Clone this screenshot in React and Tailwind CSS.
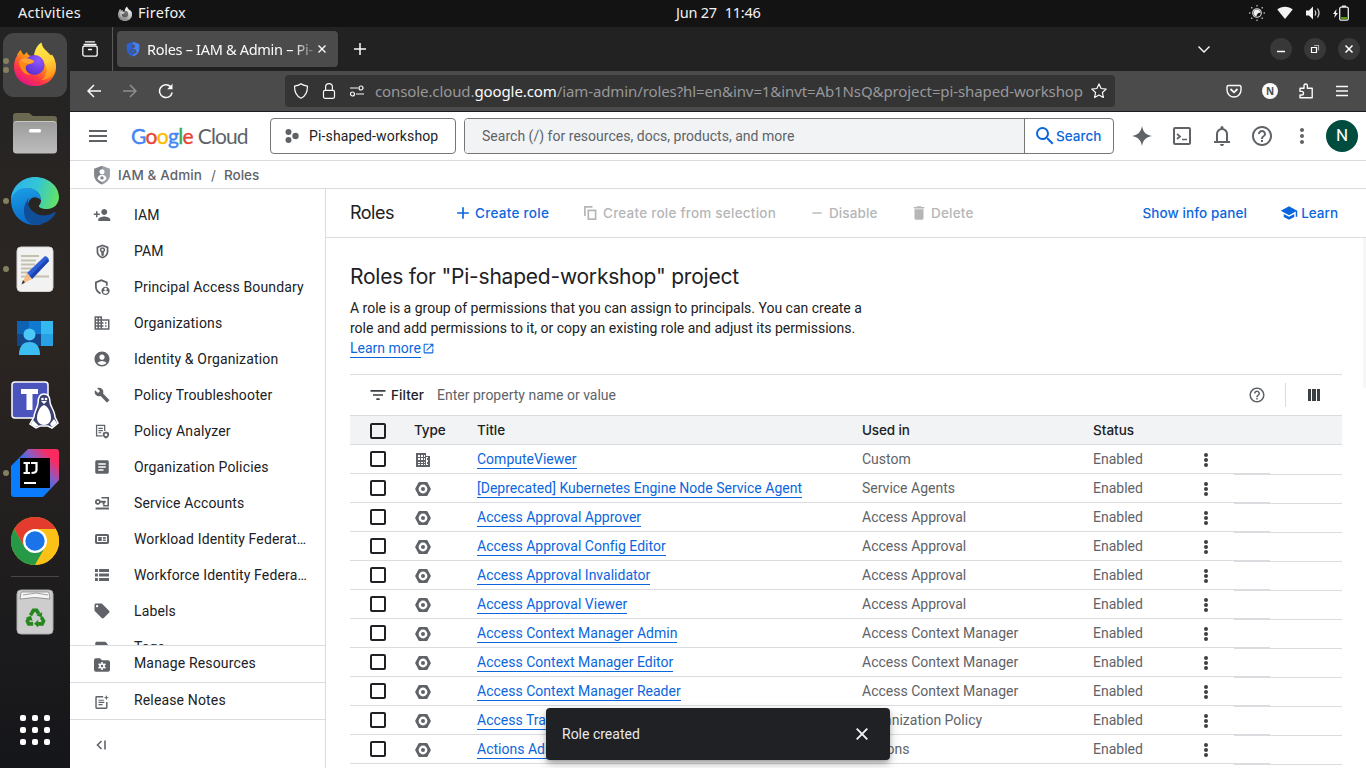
import React from 'react';
import {
  MdPersonAdd, MdDomain, MdAccountCircle, MdBuild, MdArticle,
  MdLocalOffer, MdLabel, MdSearch, MdHelpOutline, MdMoreVert, MdSchool, MdAdd, MdRemove,
  MdDelete, MdOpenInNew, MdFilterList, MdMenu,
} from 'react-icons/md';

const ui = "font-['Noto_Sans',sans-serif]";
const gs = "font-['Inter',sans-serif]";

/* ---------- Dock icons (48 x 48) ---------- */

const FirefoxIcon = ({ mono = false, className = 'size-12' }) => {
  const id = mono ? 'm' : 'c';
  const c = mono
    ? ['#f0f0f0', '#b5b5b5', '#8a8a8a', '#555', '#777', '#d0d0d0']
    : ['#ffe94a', '#ff8a16', '#e31587', '#5b2fd0', '#9059ff', '#ffa436'];
  return (
    <svg viewBox="0 0 48 48" className={className}>
      <defs>
        <linearGradient id={`fx${id}`} x1="0.85" y1="0.1" x2="0.25" y2="0.95">
          <stop offset="0" stopColor={c[0]} />
          <stop offset="0.4" stopColor={c[1]} />
          <stop offset="0.72" stopColor={mono ? '#999' : '#ff3647'} />
          <stop offset="1" stopColor={c[2]} />
        </linearGradient>
        <radialGradient id={`fp${id}`} cx="0.7" cy="0.25" r="0.8">
          <stop offset="0" stopColor={c[4]} />
          <stop offset="1" stopColor={c[3]} />
        </radialGradient>
        <linearGradient id={`fy${id}`} x1="0.5" y1="0" x2="0.7" y2="1">
          <stop offset="0" stopColor={c[0]} />
          <stop offset="0.5" stopColor={mono ? '#ddd' : '#ffd23a'} />
          <stop offset="1" stopColor={c[1]} />
        </linearGradient>
      </defs>
      <path d="M10 9c.5 2.500 1.500 4 3 5l3-3c.3 2 1.500 3.500 4 4l20-1c3.500 3.500 5 8 5 12 0 11-9 19-21 19S3 37 3 26c0-5 1-8 3-11 0-2 2-5 4-6z" fill={`url(#fx${id})`} />
      <path d="M23 14c1-5 3-10 7.500-12.500.5 4 2.500 6 5.500 9l4 4 1-1c3 4 4 8 3.500 13-1 8-7 12-14 12.500 6-4 7-13 2-18-2-3-6-5-9.500-7z" fill={`url(#fy${id})`} />
      <circle cx="23.500" cy="24" r="10" fill={`url(#fp${id})`} />
      <path d="M8 20c6-2 9-1 15-.5 1 1.500-1 3-4 3.500-4 .5-5 3-4 6 1 2.500 3 4 5 5-7 0-12-6-12-14z" fill={c[1]} />
      <path d="M9 19c4-2.500 8-2 13.500.5.5 1.500-2 2.500-5 3-3-.2-6-1.500-8.500-3.500z" fill={c[5]} />
    </svg>
  );
};

const FolderIcon = () => (
  <svg viewBox="0 0 48 48" className="size-12">
    <defs>
      <linearGradient id="fold" x1="0" y1="0" x2="0" y2="1">
        <stop offset="0" stopColor="#9b9b9b" />
        <stop offset="1" stopColor="#bdbdbd" />
      </linearGradient>
    </defs>
    <path d="M2 7q0-3 3-3h13l4 3h21q3 0 3 3v12H2z" fill="#6b6850" />
    <rect x="2" y="12" width="44" height="32.500" rx="3.500" fill="url(#fold)" />
    <path d="M3 14q1-1.500 3-1.500h36q2 0 3 1.500" fill="none" stroke="#c8c8c8" strokeWidth="1" />
    <rect x="18" y="20" width="12" height="3.500" rx="1.500" fill="#fff" />
  </svg>
);

const EdgeIcon = () => (
  <svg viewBox="0 0 48 48" className="size-12">
    <defs>
      <linearGradient id="e1" x1="0" y1="0.3" x2="1" y2="0.5">
        <stop offset="0" stopColor="#2fb2ea" />
        <stop offset="0.5" stopColor="#33c5d8" />
        <stop offset="1" stopColor="#62e265" />
      </linearGradient>
      <linearGradient id="e2" x1="0.3" y1="0" x2="0.5" y2="1">
        <stop offset="0" stopColor="#1a9de6" />
        <stop offset="1" stopColor="#0a68c4" />
      </linearGradient>
    </defs>
    <path d="M0 23C1 15 8 10 16 11c8 0 14 5 14 12-7-6-13-1-13 6 0 8 6 14 14 18-3 1-5 1-7 1C10 48 0 37 0 23z" fill="url(#e2)" />
    <path d="M24 0c13 0 24 9 24 20 0 7-5 12-12 12-5 0-8.500-1.500-8-3.500 1-1 2-3 2-5C30 15 23 11 15 11 7 11 2 16 0 23 0 10 11 0 24 0z" fill="url(#e1)" />
    <path d="M19 19.500c-4 4-2 11 3 15 6 5 14 5 21 1 1-.5 2 0 1.500 1C40 44 32 48 24 48c-8-1-12-9-11-17 1-5 3-8.500 6-11.500z" fill="#114e99" />
  </svg>
);

const EditorIcon = () => (
  <svg viewBox="0 0 48 48" className="size-12">
    <rect x="6" y="2" width="36" height="44.500" rx="4" fill="#f2f2f2" stroke="#d4d4d4" />
    <path d="M10 11h18M10 15.500h15M10 19.500h14M10 23.500h12M10 27.500h9M10 31.500h28" stroke="#c4c0ae" strokeWidth="1.800" />
    <path d="m16 28 18-17q4 1 4 5L21 34z" fill="#2f5fd6" />
    <path d="m19 31 17-17 2 2-17 18z" fill="#1b42b0" />
    <path d="m16 28 5 6-10 5z" fill="#f4bc82" />
    <path d="m12 35 2 2.500-3.500 2z" fill="#333" />
  </svg>
);

const ContactsIcon = () => (
  <svg viewBox="0 0 48 48" className="size-12">
    <rect x="6" y="8" width="36" height="25" rx="1.500" fill="#0f7ad0" />
    <path d="M6 8h12v13H6z" fill="#0e62b4" />
    <path d="M6 21h24v12H6z" fill="#14468c" />
    <path d="M30 8h12v13H30z" fill="#35b8f0" />
    <path d="M30 21h12v12H30z" fill="#28a0e4" />
    <circle cx="18.500" cy="21.500" r="6" fill="#4cc8f6" />
    <path d="M8 42c0-9 4-13 10.500-13S29 33 29 42z" fill="#3dbef2" />
  </svg>
);

const TeamsIcon = () => (
  <svg viewBox="0 0 48 48" className="size-12">
    <rect x="1" y="1" width="36" height="36" rx="3" fill="#4b53bc" stroke="#fff" strokeWidth="1.500" />
    <path d="M10 8h17v5h-5.500v16h-6V13H10z" fill="#fff" />
    <path d="M33 13c4 0 6 3 6 8 0 4 5 9 5 15l3 6-6 5-4-2h-8l-4 2-6-4 4-7c0-5 4-10 4-14 0-6 2-9 6-9z" fill="#3b4272" stroke="#fff" strokeWidth="1.500" />
    <path d="M33 24c4 1 7 8 7 13 0 4-3 7-7 7s-7-3-7-7c0-5 3-12 7-13z" fill="#fff" />
    <path d="m22 39 6 6-4 1-4-3zM43 38l3 4-5 4-2-3zM30 20h6l-3 3z" fill="#fff" />
    <circle cx="31.500" cy="18" r="1.300" fill="#fff" />
    <circle cx="35" cy="18" r="1.300" fill="#fff" />
  </svg>
);

const IntellijIcon = () => (
  <svg viewBox="0 0 48 48" className="size-12">
    <defs>
      <linearGradient id="ij" x1="0.1" y1="0.75" x2="0.85" y2="0.05">
        <stop offset="0.35" stopColor="#0a7cff" />
        <stop offset="0.65" stopColor="#8f5ac0" />
        <stop offset="0.92" stopColor="#fb2a60" />
      </linearGradient>
    </defs>
    <path d="M17 0h28q3 0 3 3v28L32 48H3q-3 0-3-3V17z" fill="url(#ij)" />
    <path d="M9 9h30v30H9z" fill="#000" />
    <path d="M12.500 14h6.500M15.750 14v10M12.500 24h6.500M20 14h5.500v7q0 3-5 3" fill="none" stroke="#fff" strokeWidth="2.200" />
    <path d="M13 34h12" stroke="#fff" strokeWidth="2" />
  </svg>
);

const ChromeIcon = () => (
  <svg viewBox="0 0 48 48" className="size-12">
    <circle cx="24" cy="24" r="24" fill="#fbc116" />
    <path d="M3.200 12A24 24 0 0 1 44.800 12H24L13.600 30z" fill="#e33b2e" />
    <path d="M3.200 12A24 24 0 0 0 24 48L34.400 30 24 24 13.600 30z" fill="#269a47" />
    <path d="M24 12h20.800A24 24 0 0 1 24 48l10.400-18z" fill="#fbc116" />
    <circle cx="24" cy="24" r="12" fill="#fff" />
    <circle cx="24" cy="24" r="9.700" fill="#1a73e8" />
  </svg>
);

const TrashIcon = () => (
  <svg viewBox="0 0 48 48" className="size-12">
    <rect x="6" y="2" width="36" height="44" rx="4" fill="#cdcdcd" stroke="#aaa" />
    <path d="M10 5q0-1 1-1h26q1 0 1 1l1 6q-15-3-30 0z" fill="#f6f6f6" stroke="#777" strokeWidth="0.700" />
    <path d="m12 7 13-2 12 2" fill="none" stroke="#888" strokeWidth="0.800" />
    <g transform="translate(2.400 3.500) scale(0.9)">
      <g fill="none" stroke="#26871f" strokeWidth="4">
        <path d="m19 26.500 3.200-5.500h3.600l2.500 4" />
        <path d="m31 28.500 2.500 4.300-1.500 3.200h-5" />
        <path d="M22 36h-5l-1.500-3.200 2.500-4" />
      </g>
      <path d="m25.500 26.500 6.500-3.500-.5 6zM27.500 31.500v8.500l-4.500-4.200zM13.500 29.500l6-2.500 2 6z" fill="#26871f" />
    </g>
  </svg>
);

/* ---------- Console icons drawn by hand ---------- */

const Svg = ({ children, className = 'size-[18px]', ...p }) => (
  <svg viewBox="0 0 24 24" fill="currentColor" className={className} {...p}>{children}</svg>
);

const ShieldKey = () => (
  <Svg className="size-[15px]">
    <path fillRule="evenodd" d="M12 .800 2.500 4.500V12c0 5.500 4.300 9.800 9.500 11.300 5.200-1.500 9.500-5.800 9.500-11.300V4.500zm0 2.900 6.800 2.600V12c0 4-2.900 7-6.800 8.400C8.100 19 5.200 16 5.200 12V6.300z" />
    <path fillRule="evenodd" d="M12 5.200a4.300 4.300 0 0 0-1.800 8.200V18l1.800 1.700 2.800-2.200-1.300-1.500 1.300-1.500-1-1.100A4.300 4.300 0 0 0 12 5.200zm0 2.500a1.700 1.700 0 1 1 0 3.400 1.700 1.700 0 0 1 0-3.400z" />
  </Svg>
);

const ShieldPerson = () => (
  <Svg className="size-4">
    <path d="M11 .500 1.500 4v7.500c0 5.500 3.800 10 8.500 11.500v-2.800c-3.300-1.500-5.800-4.700-5.800-8.700V6L11 3.300 17.800 6v4h2.700V4z" />
    <path fillRule="evenodd" d="M17.300 11.500a6.200 6.200 0 1 0 0 12.400 6.200 6.200 0 0 0 0-12.400zm0 1.600a2 2 0 1 1 0 4 2 2 0 0 1 0-4zm-3.700 6.700c0-1.400 2-2.100 3.700-2.100s3.700.7 3.700 2.100c-1 1.600-2.400 2.300-3.700 2.300s-2.700-.7-3.700-2.300z" />
  </Svg>
);

const PolicyDoc = () => (
  <Svg className="size-[15px]">
    <path d="M1.500 1h15v10h-2V3h-11v15H12v2H1.500z" />
    <path d="M5.500 6h7v1.900h-7zM5.500 9.500h7v1.900h-7zM5.500 13h4.500v1.900H5.500z" />
    <path fillRule="evenodd" d="m17.500 12 5 1.800v3.400c0 2.800-2.200 5-5 6-2.800-1-5-3.200-5-6v-3.400zm0 3a2.200 2.200 0 1 0 0 4.400 2.200 2.200 0 0 0 0-4.400z" />
  </Svg>
);

const ServiceAcc = () => (
  <Svg className="size-3.5">
    <path d="M11 1.500h13V18H14v-2.500h7.300V4.200H11zM1 19.500h23V23H1z" />
    <path fillRule="evenodd" d="M5 5a5 5 0 1 0 4.600 6.700H13V15h3.500v-3.300h2V8.300H9.600A5 5 0 0 0 5 5zm0 3a2 2 0 1 1 0 4 2 2 0 0 1 0-4z" />
  </Svg>
);

const Workload = () => (
  <Svg className="size-3.5">
    <path fillRule="evenodd" d="M3 3.500h18q3 0 3 3v11q0 3-3 3H3q-3 0-3-3v-11q0-3 3-3zm.5 3.200v10.600h17V6.700z" />
    <path d="M5.500 8.500h6v7h-6zM13.500 8.500h5v3h-5zM13.500 12.700h5v2.800h-5z" />
  </Svg>
);

const Workforce = () => (
  <Svg className="size-3.5"><path d="M0 1.700h5v5.200H0zM7 1.700h17v5.200H7zM0 9.400h5v5.200H0zM7 9.400h17v5.200H7zM0 17.100h5v5.200H0zM7 17.100h17v5.200H7z" /></Svg>
);

const FolderGear = () => (
  <Svg className="mt-1 size-4">
    <path d="M0 5q0-3 3-3h6l3 3h9q3 0 3 3v11q0 3-3 3H3q-3 0-3-3z" />
    <g fill="none" stroke="#fff">
      <circle cx="12" cy="13.500" r="3" strokeWidth="2.400" />
      <path d="M12 7.500v3M12 16.500v3M6.800 10.500l2.600 1.500M14.600 15l2.600 1.500M6.800 16.500 9.400 15M14.600 12l2.600-1.500" strokeWidth="2.200" />
    </g>
  </Svg>
);

const Notes = () => (
  <Svg className="mt-1 size-3.5">
    <path d="M14 4.300H3v17h16V12h2.500v9.500Q21.500 24 19 24H3q-2.500 0-2.500-2.500V4.300Q.500 1.800 3 1.800h11z" />
    <path d="M6 8h9v2H6zM6 11.700h10v2H6zM6 15.400h7v2H6z" />
    <path d="m19.500 0 1.200 3.300L24 4.500l-3.300 1.200L19.500 9l-1.200-3.300L15 4.500l3.300-1.200z" />
  </Svg>
);

const IamShield = ({ className, a, b, face = '#fff' }) => (
  <svg viewBox="0 0 24 24" className={className}>
    <path d="M12 1 2.500 4.500V12c0 5.300 4.300 9.800 9.500 11.400z" fill={a} />
    <path d="M12 1v22.400c5.200-1.600 9.500-6.100 9.500-11.400V4.500z" fill={b} />
    <circle cx="12" cy="8" r="3" fill={face} />
    <path d="M6.500 16.500c.5-3.500 2.700-4.800 5.500-4.800s5 1.300 5.500 4.800c-1.500 2-3.300 3-5.500 3.800-2.200-.8-4-1.800-5.500-3.800z" fill={face} />
    <circle cx="12" cy="15.500" r="2" fill={a} />
  </svg>
);

const BuildingType = () => (
  <svg viewBox="0 0 14 14" className="ml-[1px] size-3.5" fill="#5f6368" shapeRendering="crispEdges">
    <path fillRule="evenodd" d="M0 0h10v3h4v11H0zM2 2v2h2V2zM5 2v2h2V2zM8 2v2h1V2zM2 5v2h2V5zM5 5v2h2V5zM8 5v2h1V5zM2 9v1h2V9zM5 9v1h2V9zM8 9v1h1V9zM2 11v1h2v-1zM5 11v1h2v-1zM8 11v1h1v-1zM10 4v8h2V4z" />
    <path d="M11 5h1v2h-1zM11 9h1v2h-1z" />
  </svg>
);

const HexType = () => (
  <svg viewBox="0 0 16 14" className="h-3.5 w-4" fill="#5f6368">
    <path fillRule="evenodd" d="M4.500 0h7q.6 0 1 .6L15.700 6.400q.3.600 0 1.200L12.500 13.400q-.4.600-1 .6h-7q-.6 0-1-.6L.3 7.600Q0 7 .3 6.400L3.500.6Q3.900 0 4.500 0zM8 2.600a4.400 4.400 0 1 0 0 8.800 4.400 4.400 0 0 0 0-8.800z" />
    <circle cx="8" cy="7" r="2" />
  </svg>
);

const Kebab = ({ color = '#3c4043' }) => (
  <svg viewBox="0 0 4 14" className="h-3.5 w-1" fill={color}>
    <circle cx="2" cy="2" r="2" /><circle cx="2" cy="7" r="2" /><circle cx="2" cy="12" r="2" />
  </svg>
);

/* ---------- Desktop chrome ---------- */

function TopBar() {
  return (
    <div className={`flex h-[27px] shrink-0 items-center bg-[#131313] text-[14.500px] text-[#f2f2f2] ${ui}`}>
      <div className="-mt-px w-[117px] pl-[18px] tracking-[0.25px]">Activities</div>
      <FirefoxIcon mono className="mr-[5px] size-4" />
      <div className="-mt-px w-[538px] tracking-[0.25px]">Firefox</div>
      <div className="-mt-px flex w-[87px] gap-2 whitespace-nowrap tracking-[-0.25px]"><span>Jun 27</span><span>11:46</span></div>
      <div className="ml-auto flex items-center gap-3 pr-[17px] pb-0.5">
        <svg viewBox="0 0 16 16" className="size-4" fill="#eee">
          <circle cx="8" cy="8" r="4.300" fill="none" stroke="#ddd" strokeWidth="1.100" />
          <path d="M8 4.500a3.500 3.500 0 1 0 3.500 3.800A3 3 0 0 1 8 4.500z" transform="rotate(90 8 8)" />
          <path d="M7.300 0h1.400v1.500H7.300zM7.300 14.500h1.400V16H7.300zM0 7.300h1.500v1.400H0zM14.500 7.300H16v1.400h-1.500zM2 2h1.500v1.500H2zM12.500 2H14v1.500h-1.500zM2 12.500h1.500V14H2zM12.500 12.500H14V14h-1.500z" fill="#aaa" />
        </svg>
        <svg viewBox="0 0 16 13" className="h-[13px] w-4" fill="#f2f2f2"><path d="M8 13 .3 3.500C4.500-.2 11.500-.2 15.700 3.500z" /></svg>
        <svg viewBox="0 0 16 14" className="h-3.5 w-4"><path d="M1 4.500h3L8 .5v13l-4-4H1z" fill="#f2f2f2" /><path d="M10 4.500q1.500 2.500 0 5M12.500 2.500q3 4.500 0 9" fill="none" stroke="#ccc" strokeWidth="1.300" /></svg>
        <svg viewBox="0 0 16 16" className="size-4"><rect x="6.700" y="2.200" width="8.600" height="13" rx="1.500" fill="none" stroke="#eee" strokeWidth="1.300" /><path d="M9 .5h4v1.500H9z" fill="#eee" /><path d="M8 12h6v2H8z" fill="#4e9a06" /><path d="M3.500 4 0 9h2l-.8 4L5 8H3z" fill="#eee" /></svg>
      </div>
    </div>
  );
}

const dock = [
  [FirefoxIcon, 2], [FolderIcon, 0], [EdgeIcon, 1], [EditorIcon, 1],
  [ContactsIcon, 0], [TeamsIcon, 0], [IntellijIcon, 1], [ChromeIcon, 0],
];

function Dock() {
  return (
    <div className="flex w-[70px] shrink-0 flex-col gap-1 bg-linear-to-b from-[#232323] via-[#2c2622] via-40% to-[#15161a] pt-1.5">
      {dock.map(([Icon, dots], i) => (
        <div key={i} className="flex h-16 shrink-0 items-center">
          <div className={`relative ml-[3px] flex size-16 items-center justify-center rounded-[11px] ${i === 0 ? 'bg-[#464646]' : ''}`}>
            <div className="absolute left-0 flex flex-col gap-[3px]">
              {Array.from({ length: dots }, (_, k) => <span key={k} className="size-1.5 rounded-full bg-[#83805f]" />)}
            </div>
            <Icon />
          </div>
        </div>
      ))}
      <div className="mx-[11px] mt-[-1px] h-px shrink-0 bg-[#4b4744]" />
      <div className="mt-[-1px] flex h-16 shrink-0 items-center justify-center"><TrashIcon /></div>
      <div className="mt-auto mb-[23px] grid grid-cols-3 gap-1.5 self-center">
        {Array.from({ length: 9 }, (_, i) => <span key={i} className="size-1.5 rounded-[2px] bg-white" />)}
      </div>
    </div>
  );
}

function WinBtn({ children }) {
  return <div className="flex size-[22px] items-center justify-center rounded-full bg-[#383838]"><svg viewBox="0 0 10 10" className="size-2.5" fill="none" stroke="#fff" strokeWidth="1.200">{children}</svg></div>;
}

function Tabs() {
  return (
    <div className={`flex h-11 shrink-0 items-center bg-[#222] text-[#fbfbfe] ${ui}`}>
      <div className="flex h-full w-[43px] items-center justify-center border-r border-[#5a5a5a] pr-0.5">
        <svg viewBox="0 0 16 16" className="size-4" fill="none" stroke="#fbfbfe" strokeWidth="1.300" strokeLinecap="round">
          <path d="M3.500.8h9M2 3.300h12" /><rect x=".8" y="5" width="14.400" height="10.200" rx="2" /><path d="M6.500 8.500h3" />
        </svg>
      </div>
      <div className="ml-1 flex h-9 w-[221px] items-center rounded bg-[#4b4b4b] px-2 shadow">
        <IamShield className="size-4 shrink-0" a="#2c62d8" b="#4a7ff0" face="#46557c" />
        <div className="ml-1.5 mt-px w-[167px] overflow-hidden whitespace-nowrap text-[14.500px] tracking-[-0.3px] [mask-image:linear-gradient(to_right,#000_88%,rgba(0,0,0,0.2))]">Roles – IAM &amp; Admin – Pi-</div>
        <svg viewBox="0 0 8 8" className="ml-1 size-2 shrink-0" stroke="#fbfbfe" strokeWidth="1.400"><path d="m.5.500 7 7M7.500.500l-7 7" /></svg>
      </div>
      <svg viewBox="0 0 12 12" className="ml-4 size-3" stroke="#fbfbfe" strokeWidth="1.500"><path d="M6 0v12M0 6h12" /></svg>
      <svg viewBox="0 0 12 7" className="ml-auto mr-[60px] h-[7px] w-3" fill="none" stroke="#fbfbfe" strokeWidth="1.400"><path d="m.5.500 5.500 5.500L11.500.500" /></svg>
      <div className="flex gap-3 pr-1.5">
        <WinBtn><path d="M1 7.500h8" strokeWidth="1.500" /></WinBtn>
        <WinBtn><path d="M1.500 3.500h5v5h-5z" /><path d="M4 1.500h4.500v5" stroke="#aaa" /></WinBtn>
        <WinBtn><path d="m1.500 1.500 7 7M8.500 1.500l-7 7" strokeWidth="1.500" /></WinBtn>
      </div>
    </div>
  );
}

function Toolbar() {
  return (
    <div className={`flex h-[41px] shrink-0 items-center border-b border-[#1c1b22] bg-[#4b4b4b] ${ui}`}>
      <svg viewBox="0 0 14 14" className="ml-[17px] size-3.5" fill="none" stroke="#fbfbfe" strokeWidth="1.500"><path d="M14 7H1M7 1 1 7l6 6" /></svg>
      <svg viewBox="0 0 14 14" className="ml-[22px] size-3.5" fill="none" stroke="#8f8f92" strokeWidth="1.500"><path d="M0 7h13M7 1l6 6-6 6" /></svg>
      <svg viewBox="0 0 16 16" className="ml-[21px] size-4" fill="none" stroke="#fbfbfe" strokeWidth="1.500"><path d="M14.200 9.500A6.400 6.400 0 1 1 12.500 3.600" /><path d="M14.500.800v5.400H9.200z" fill="#fbfbfe" stroke="none" /></svg>
      <div className="ml-[111px] flex h-8 w-[830px] items-center rounded bg-[#343434] pl-2 pr-2">
        <svg viewBox="0 0 16 16" className="size-4 shrink-0" fill="none" stroke="#fbfbfe" strokeWidth="1.200"><path d="M8 .8C6.500 2.200 3.800 2.800 1.500 3.200c0 5.500 2 10 6.500 12 4.500-2 6.500-6.500 6.500-12C12.200 2.800 9.500 2.200 8 .8z" strokeLinejoin="round" /></svg>
        <svg viewBox="0 0 16 16" className="ml-3 size-4 shrink-0" fill="none" stroke="#fbfbfe" strokeWidth="1.200"><rect x="2.500" y="7.300" width="11" height="8" rx="1.500" /><path d="M4.600 7V4a3.400 3.400 0 0 1 6.800 0v3" /></svg>
        <svg viewBox="0 0 16 16" className="ml-3 size-4 shrink-0" fill="none" stroke="#fbfbfe" strokeWidth="1.200"><path d="M1 5h8M7 11h8" /><circle cx="12" cy="5" r="2" /><circle cx="3.500" cy="11" r="2" /></svg>
        <div className="ml-[10px] mt-px w-[710px] whitespace-nowrap text-[15px] tracking-[-0.1px] text-[#98989b]">console.cloud.<span className="text-[#fbfbfe]">google.com</span>/iam-admin/roles?hl=en&amp;inv=1&amp;invt=Ab1NsQ&amp;project=pi-shaped-workshop</div>
        <svg viewBox="0 0 16 16" className="ml-auto size-4 shrink-0" fill="none" stroke="#fbfbfe" strokeWidth="1.200" strokeLinejoin="round"><path d="m8 .9 2.100 4.600 5.100.6-3.800 3.400 1 5L8 12l-4.400 2.500 1-5L.8 6.100l5.100-.6z" /></svg>
      </div>
      <div className="ml-auto flex items-center gap-5 pr-[18px]">
        <svg viewBox="0 0 16 16" className="size-4" fill="none" stroke="#fbfbfe" strokeWidth="1.400"><path d="M2.500 2.500h11q1.500 0 1.500 1.500v3a7 7 0 0 1-14 0V4q0-1.500 1.500-1.500z" /><path d="m4.500 6 3.500 3.300L11.500 6" strokeWidth="1.800" /></svg>
        <div className="flex size-4 items-center justify-center rounded-full bg-[#fbfbfe] text-[10px] font-bold text-[#4b4b4b]">N</div>
        <svg viewBox="0 0 16 16" className="mr-0.5 size-4" fill="none" stroke="#fbfbfe" strokeWidth="1.400" strokeLinejoin="round"><path d="M2 7V5.200h4V2.700a1.700 1.700 0 0 1 3.400 0v2.500h4.800v9.600H2V12h1.700a1.800 1.800 0 0 0 0-3.600H2z" /></svg>
        <svg viewBox="0 0 12 12" className="h-3 w-3" stroke="#fbfbfe" strokeWidth="1.300"><path d="M0 1.500h12M0 6h12M0 10.500h12" /></svg>
      </div>
    </div>
  );
}

/* ---------- Console ---------- */

function Header() {
  return (
    <div className="flex h-[49px] shrink-0 items-center border-b border-[#dadce0] text-[#5f6368]">
      <MdMenu className="ml-4 size-6" />
      <div className="ml-[21px] flex w-[119px] gap-[5px] whitespace-nowrap font-['Lato',sans-serif] text-[21px] leading-6">
        <span className="tracking-[-0.7px] [-webkit-text-stroke:0.4px]"><span className="text-[#4285f4]">G</span><span className="text-[#ea4335]">o</span><span className="text-[#fbbc04]">o</span><span className="text-[#4285f4]">g</span><span className="text-[#34a853]">l</span><span className="text-[#ea4335]">e</span></span>
        <span className="tracking-[-0.9px]">Cloud</span>
      </div>
      <div className="ml-5 flex h-9 w-[186px] items-center rounded border border-[#747775] pl-3.5 text-[14px] tracking-[0.14px] text-[#202124]">
        <svg viewBox="0 0 14 14" className="mr-[10px] size-3.5" fill="#5f6368"><circle cx="3.500" cy="3" r="3" /><circle cx="3.500" cy="11" r="3" /><circle cx="10.500" cy="7" r="3.200" /></svg>
        Pi-shaped-workshop
      </div>
      <div className="ml-2 flex h-9 w-[650px] items-center overflow-hidden rounded border border-[#747775]">
        <div className="flex h-full flex-1 items-center border-r border-[#747775] bg-[#f1f3f4] pl-[17px] text-[14px] tracking-[0.02px] text-[#5f6368]">Search (/) for resources, docs, products, and more</div>
        <div className={`flex h-full w-[88px] items-center pl-2 text-[13.500px] font-medium text-[#0b66de] ${gs}`}><MdSearch className="size-6 shrink-0" /><span className="-ml-px">Search</span></div>
      </div>
      <div className="ml-auto flex items-center gap-4 pr-2">
        <Svg className="size-6"><path d="M12 2c1 6 4 9 10 10-6 1-9 4-10 10-1-6-4-9-10-10 6-1 9-4 10-10z" /></Svg>
        <Svg className="size-6" fill="none" stroke="currentColor" strokeWidth="2"><rect x="4" y="4" width="16" height="16" rx="1" /><path d="m7 10 3 2.500L7 15M12 15.500h5" strokeWidth="1.700" /></Svg>
        <Svg className="size-6"><path d="M4 19v-2h2v-7q0-2.100 1.250-3.700Q8.500 4.700 10.500 4.200v-.7q0-.6.440-1.100Q11.400 2 12 2t1.060.44q.44.440.44 1.060v.7q2 .5 3.250 2.100T18 10v7h2v2zm8 3q-.8 0-1.400-.6T10 20h4q0 .8-.6 1.400T12 22zm-4-5h8v-7q0-1.650-1.180-2.830Q13.650 6 12 6q-1.650 0-2.830 1.180Q8 8.350 8 10z" /></Svg>
        <MdHelpOutline className="size-6" />
        <MdMoreVert className="size-6" />
        <div className="-ml-1 flex size-8 items-center justify-center rounded-full bg-[#004d40] text-[17px] text-white">N</div>
      </div>
    </div>
  );
}

const nav = [
  [MdPersonAdd, 'IAM'], [ShieldKey, 'PAM'], [ShieldPerson, 'Principal Access Boundary'],
  [MdDomain, 'Organizations'], [MdAccountCircle, 'Identity & Organization'], [MdBuild, 'Policy Troubleshooter'],
  [PolicyDoc, 'Policy Analyzer'], [MdArticle, 'Organization Policies'], [ServiceAcc, 'Service Accounts'],
  [Workload, 'Workload Identity Federat…'], [Workforce, 'Workforce Identity Federa…'],
  [MdLocalOffer, 'Labels'], [MdLabel, 'Tags'],
];

function NavItem({ icon: Icon, label }) {
  return (
    <div className="flex h-9 shrink-0 items-center pl-6">
      <span className="flex w-4 shrink-0 justify-center text-[#5f6368] [&>svg]:shrink-0"><Icon className={Icon === MdBuild ? 'size-4' : 'size-[18px]'} /></span>
      <span className="ml-6 whitespace-nowrap text-[14px] tracking-[0.15px] text-[#202124]">{label}</span>
    </div>
  );
}

function Sidebar() {
  return (
    <div className="flex w-64 shrink-0 flex-col border-r border-[#dadce0]">
      <div className="flex h-[456px] shrink-0 flex-col overflow-hidden pt-2">
        {nav.map(([icon, label]) => <NavItem key={label} icon={icon} label={label} />)}
      </div>
      <div className="h-[37px] shrink-0 border-t border-[#dadce0] [&>div]:h-[34px]"><NavItem icon={FolderGear} label="Manage Resources" /></div>
      <div className="h-[38px] shrink-0 border-y border-[#dadce0] [&>div]:h-[34px]"><NavItem icon={Notes} label="Release Notes" /></div>
      <svg viewBox="0 0 10 10" className="mt-5 ml-[26px] size-2.5" fill="none" stroke="#5f6368" strokeWidth="1.600"><path d="M5.500 1 1.500 5l4 4M9 .500v9" /></svg>
    </div>
  );
}

const rows = [
  ['ComputeViewer', 'Custom'],
  ['[Deprecated] Kubernetes Engine Node Service Agent', 'Service Agents'],
  ['Access Approval Approver', 'Access Approval'],
  ['Access Approval Config Editor', 'Access Approval'],
  ['Access Approval Invalidator', 'Access Approval'],
  ['Access Approval Viewer', 'Access Approval'],
  ['Access Context Manager Admin', 'Access Context Manager'],
  ['Access Context Manager Editor', 'Access Context Manager'],
  ['Access Context Manager Reader', 'Access Context Manager'],
  ['Access Transparency Admin', 'Organization Policy'],
  ['Actions Admin', 'Actions'],
];

const Check = () => <span className="block size-4 rounded-[2px] border-2 border-[#202124]" />;

function Table() {
  return (
    <div className="mt-4 w-[992px] border-t border-[#dadce0]">
      <div className="flex h-10 items-center pl-[18px]">
        <MdFilterList className="size-5 text-[#3c4043]" />
        <span className={`ml-[3px] w-[46px] text-[13.500px] font-medium tracking-[0.1px] text-[#202124] ${gs}`}>Filter</span>
        <span className="flex-1 text-[14px] text-[#5f6368]">Enter property name or value</span>
        <MdHelpOutline className="size-[18px] text-[#5f6368]" />
        <span className="ml-[19px] h-6 w-px bg-[#dadce0]" />
        <span className="ml-[22px] mr-[22px] flex gap-px"><i className="h-3 w-[3.300px] bg-[#3c4043]" /><i className="h-3 w-[3.300px] bg-[#3c4043]" /><i className="h-3 w-[3.300px] bg-[#3c4043]" /></span>
      </div>
      <div className={`flex h-[30px] items-center border-y border-[#dadce0] bg-[#f1f3f4] pl-5 text-[13.500px] font-medium text-[#202124] ${gs}`}>
        <span className="w-11 pt-0.5"><Check /></span>
        <span className="w-[63px] tracking-[-0.15px]">Type</span>
        <span className="w-[385px]">Title</span>
        <span className="w-[231px] tracking-[-0.15px]">Used in</span>
        <span>Status</span>
      </div>
      {rows.map(([title, used], i) => (
        <div key={title} className="flex h-[29px] text-[14px] text-[#5f6368]">
          <div className="flex w-[884px] items-center border-b border-[#dadce0] pl-5">
            <span className="w-[45px]"><Check /></span>
            <span className="w-[62px] pt-0.5">{i === 0 ? <BuildingType /> : <HexType />}</span>
            <span className="w-[385px]"><a className="inline-block border-b border-[#0b66de] leading-[17px] tracking-[0.01px] text-[#0b66de]">{title}</a></span>
            <span className="w-[231px]">{used}</span>
            <span className="w-[111px]">Enabled</span>
            <span className="pt-0.5"><Kebab /></span>
          </div>
          <div className="w-9 border-b border-[#dadce0] shadow-[0_1px_0_#dadce0]" />
          <div className="flex-1 shadow-[0_1px_0_#dadce0]" />
        </div>
      ))}
    </div>
  );
}

function Main() {
  return (
    <div className="flex flex-1 flex-col overflow-hidden">
      <div className={`flex h-[49px] shrink-0 items-center border-b border-[#dadce0] pl-6 text-[13.500px] font-medium text-[#b5b6b8] ${gs}`}>
        <span className="-mt-0.5 w-[103px] text-[18px] font-normal tracking-[-0.5px] text-[#202124]">Roles</span>
        <span className="flex w-[131px] items-center text-[#0b66de]"><MdAdd className="size-5" /><span className="ml-0.5 tracking-[0.28px]">Create role</span></span>
        <span className="flex w-[225px] items-center">
          <svg viewBox="0 0 13 14" className="mr-1.5 h-3.5 w-[13px]" fill="none" stroke="currentColor" strokeWidth="1.700"><path d="M.9 10V.9h7.600M4.300 4.300h7.300v8.800H4.300z" /></svg>
          <span className="tracking-[0.23px]">Create role from selection</span>
        </span>
        <span className="flex w-[101px] items-center"><MdRemove className="size-4" /><span className="ml-[4px] tracking-[0.1px]">Disable</span></span>
        <span className="flex items-center"><MdDelete className="size-[18px]" /><span className="ml-[3px] tracking-[0.2px]">Delete</span></span>
        <span className="ml-auto tracking-[0.1px] text-[#0b66de]">Show info panel</span>
        <span className="ml-[33px] mr-[28px] flex items-center text-[#0b66de]"><MdSchool className="size-[18px]" /><span className="ml-[3px]">Learn</span></span>
      </div>
      <div className="flex flex-1 flex-col overflow-hidden pl-6 pt-[23px]">
        <h1 className={`h-[37px] text-[21px] leading-8 tracking-[-0.22px] text-[#202124] ${gs}`}>Roles for "Pi-shaped-workshop" project</h1>
        <p className="w-[520px] text-[14px] leading-5 text-[#202124]">A role is a group of permissions that you can assign to principals. You can create a role and add permissions to it, or copy an existing role and adjust its permissions.</p>
        <div className="flex h-5 items-center pt-px text-[14px] text-[#0b66de]"><a className="border-b border-[#0b66de] leading-[17px]">Learn more</a><MdOpenInNew className="ml-[1px] -mt-px size-[13px]" /></div>
        <Table />
      </div>
    </div>
  );
}

export default function App() {
  return (
    <div className="relative flex h-[768px] w-[1366px] flex-col overflow-hidden bg-white font-['Roboto',sans-serif]">
      <TopBar />
      <div className="flex min-h-0 flex-1">
        <Dock />
        <div className="flex min-w-0 flex-1 flex-col bg-white">
          <Tabs />
          <Toolbar />
          <Header />
          <div className={`flex h-7 shrink-0 items-center border-b border-[#dadce0] pl-[22px] pt-0.5 text-[13.500px] font-medium text-[#5f6368] ${gs}`}>
            <IamShield className="-mt-0.5 size-5" a="#80868b" b="#9aa0a6" />
            <span className="ml-1.5 w-[93px] tracking-[0.1px]">IAM &amp; Admin</span><span className="w-[13px] font-normal">/</span><span>Roles</span>
          </div>
          <div className="flex min-h-0 flex-1"><Sidebar /><Main /></div>
        </div>
      </div>
      <div className="absolute right-0 top-[238px] h-[150px] w-[3px] bg-[#f6f6f6]" />
      <div className="absolute left-[546px] top-[708px] flex h-[52px] w-[344px] items-center justify-between rounded bg-[#202124] pl-4 pr-[22px] text-[14px] text-[#e8eaed] shadow-[0_3px_5px_-1px_rgba(0,0,0,0.3),0_4px_12px_rgba(0,0,0,0.2)]">
        <span>Role created</span>
        <svg viewBox="0 0 12 12" className="size-3" stroke="#f1f3f4" strokeWidth="1.900"><path d="m.7.700 10.600 10.600M11.300.700.700 11.300" /></svg>
      </div>
    </div>
  );
}
